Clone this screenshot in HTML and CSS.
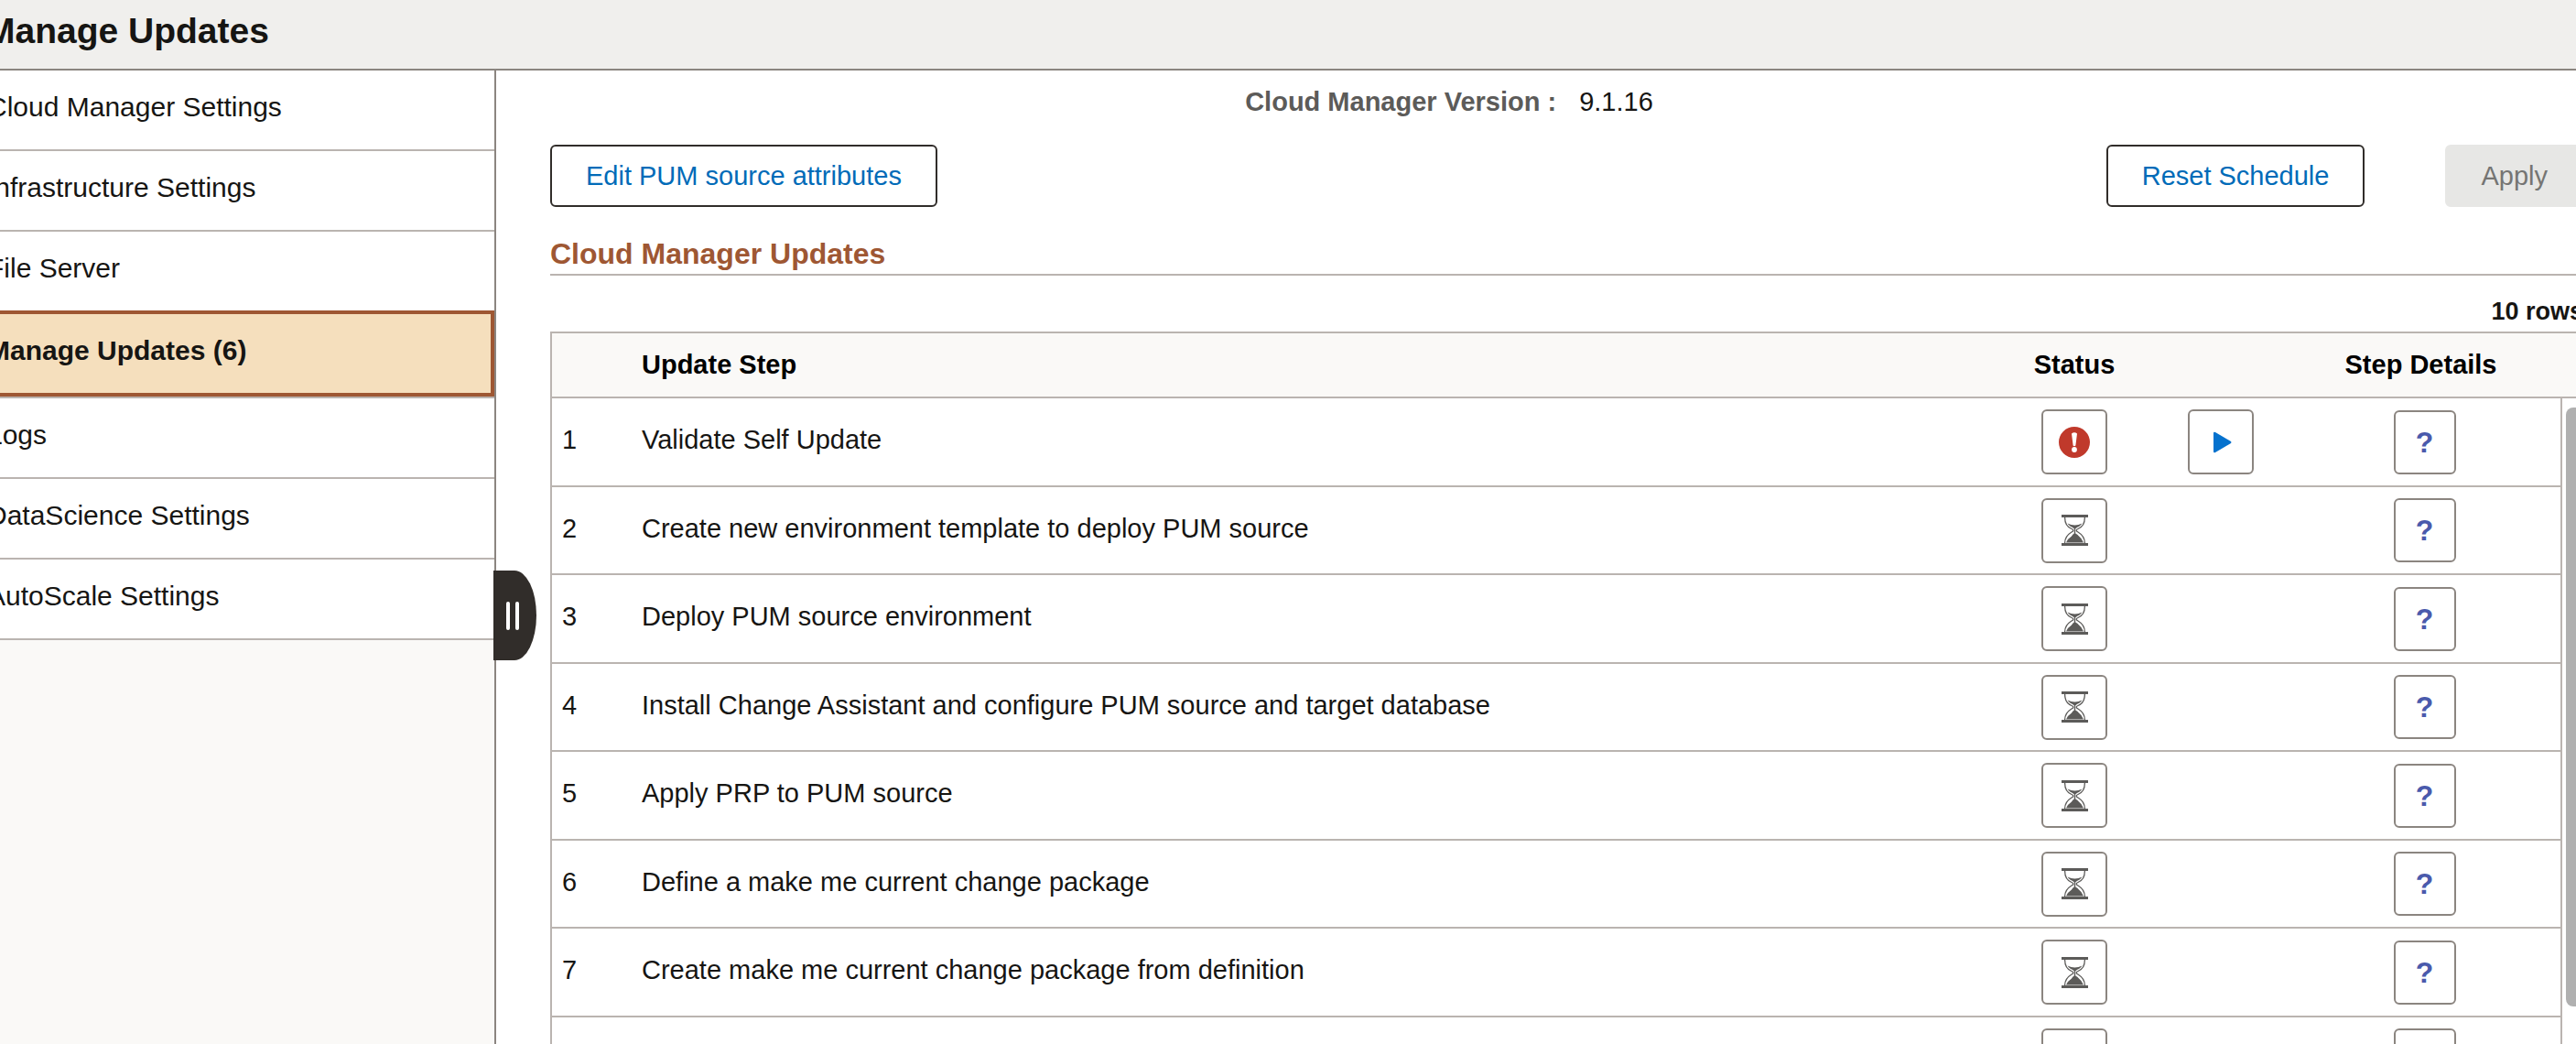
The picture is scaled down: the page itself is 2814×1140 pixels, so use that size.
FILE: index.html
```html
<!DOCTYPE html>
<html lang="en">
<head>
<meta charset="utf-8">
<title>Manage Updates</title>
<link rel="stylesheet" href="styles.css">
</head>
<body>
<svg class="sprite" aria-hidden="true">
  <symbol id="hourglass" viewBox="0 0 29 34">
    <path d="M0 0H29V3H0ZM0 31H29V34H0Z" fill="#5c5b59"/>
    <path d="M3.6 3C3.6 10 6 13.5 11 15.5C13.4 16.6 13.4 17.6 11 19C6 22 3.6 25.5 3.6 31M25.4 3C25.4 10 23 13.5 18 15.5C15.6 16.6 15.6 17.6 18 19C23 22 25.4 25.5 25.4 31" fill="none" stroke="#5c5b59" stroke-width="1.3"/>
    <path d="M6.5 9.5Q14.5 13.5 22.5 9.5C21 12.5 18 13 15.2 15.2V20.5Q17.500 21.500 19 23.500Q22 25.500 24 30.500H5Q7 26 11 23.500Q12 21.500 13.800 20.500V15.200C11 13 8 12.500 6.500 9.500Z" fill="#5c5b59"/>
  </symbol>
  <symbol id="error" viewBox="0 0 34 34">
    <circle cx="17" cy="17" r="17" fill="#c0392b"/>
    <path d="M14 7.500Q17 5 20 7.500L18.400 20.500Q17 21.800 15.600 20.500Z" fill="#fff"/>
    <circle cx="17" cy="25" r="2.900" fill="#fff"/>
  </symbol>
  <symbol id="play" viewBox="0 0 24 24">
    <path d="M4 2Q4 0 6 1L23 11Q24 12 23 13L6 23Q4 24 4 22Z" fill="#0572ce"/>
  </symbol>
</svg>
<header class="banner"><h1>Manage Updates</h1></header>
<div class="shell">
  <nav class="sidebar" aria-label="Settings">
    <ul>
      <li><a href="#cloud">Cloud Manager Settings</a></li>
      <li><a href="#infrastructure">Infrastructure Settings</a></li>
      <li><a href="#files">File Server</a></li>
      <li class="active"><a href="#updates" aria-current="page">Manage Updates (6)</a></li>
      <li><a href="#logs">Logs</a></li>
      <li><a href="#datascience">DataScience Settings</a></li>
      <li><a href="#autoscale">AutoScale Settings</a></li>
    </ul>
  </nav>
  <main class="content">
    <button class="handle" type="button" aria-label="Collapse menu"><span></span><span></span></button>
    <p class="version"><strong>Cloud Manager Version :</strong><span>9.1.16</span></p>
    <div class="actions">
      <button class="btn" type="button">Edit PUM source attributes</button>
      <button class="btn push" type="button">Reset Schedule</button>
      <button class="btn" type="button" disabled>Apply</button>
    </div>
    <h2>Cloud Manager Updates</h2>
    <p class="count">10 rows</p>
    <table class="steps">
      <colgroup><col class="c-num"><col><col class="c-status"><col class="c-run"><col class="c-details"><col class="c-gutter"></colgroup>
      <thead>
        <tr><th></th><th class="name">Update Step</th><th>Status</th><th></th><th class="details">Step Details</th><th></th></tr>
      </thead>
      <tbody>
        <tr><td class="num">1</td><td class="name">Validate Self Update</td>
          <td><button class="icon-btn" type="button" aria-label="Error"><svg width="34" height="34"><use href="#error"/></svg></button></td>
          <td><button class="icon-btn" type="button" aria-label="Run"><svg width="24" height="24"><use href="#play"/></svg></button></td>
          <td class="help"><button class="icon-btn" type="button">?</button></td>
          <td class="gutter" rowspan="8"><div class="thumb"></div></td></tr>
        <tr><td class="num">2</td><td class="name">Create new environment template to deploy PUM source</td>
          <td><button class="icon-btn" type="button" aria-label="Pending"><svg width="29" height="34"><use href="#hourglass"/></svg></button></td><td></td>
          <td class="help"><button class="icon-btn" type="button">?</button></td></tr>
        <tr><td class="num">3</td><td class="name">Deploy PUM source environment</td>
          <td><button class="icon-btn" type="button" aria-label="Pending"><svg width="29" height="34"><use href="#hourglass"/></svg></button></td><td></td>
          <td class="help"><button class="icon-btn" type="button">?</button></td></tr>
        <tr><td class="num">4</td><td class="name">Install Change Assistant and configure PUM source and target database</td>
          <td><button class="icon-btn" type="button" aria-label="Pending"><svg width="29" height="34"><use href="#hourglass"/></svg></button></td><td></td>
          <td class="help"><button class="icon-btn" type="button">?</button></td></tr>
        <tr><td class="num">5</td><td class="name">Apply PRP to PUM source</td>
          <td><button class="icon-btn" type="button" aria-label="Pending"><svg width="29" height="34"><use href="#hourglass"/></svg></button></td><td></td>
          <td class="help"><button class="icon-btn" type="button">?</button></td></tr>
        <tr><td class="num">6</td><td class="name">Define a make me current change package</td>
          <td><button class="icon-btn" type="button" aria-label="Pending"><svg width="29" height="34"><use href="#hourglass"/></svg></button></td><td></td>
          <td class="help"><button class="icon-btn" type="button">?</button></td></tr>
        <tr><td class="num">7</td><td class="name">Create make me current change package from definition</td>
          <td><button class="icon-btn" type="button" aria-label="Pending"><svg width="29" height="34"><use href="#hourglass"/></svg></button></td><td></td>
          <td class="help"><button class="icon-btn" type="button">?</button></td></tr>
        <tr><td class="num"></td><td class="name"></td>
          <td><button class="icon-btn" type="button" aria-label="Pending"></button></td><td></td>
          <td class="help"><button class="icon-btn" type="button" aria-label="Help"></button></td></tr>
      </tbody>
    </table>
  </main>
</div>
</body>
</html>
```
FILE: styles.css
```css
* { box-sizing: border-box; }

body {
  margin: 0;
  height: 100vh;
  overflow: hidden;
  display: flex;
  flex-direction: column;
  background: #fff;
  color: #161513;
  font: 29px/34px "Liberation Sans", Arial, sans-serif;
}

h1, h2, p, ul { margin: 0; padding: 0; }
button { font: inherit; }
.sprite { display: none; }

.banner {
  flex: none;
  padding: 11px 0 18px;
  margin-left: -16px;
  background: #f0efed;
  border-bottom: 2px solid #8b8580;
}
h1 { font-size: 39px; line-height: 46px; }

/* The shell runs a little past both window edges */
.shell {
  flex: 1;
  min-height: 0;
  display: flex;
  margin: 0 -8px 0 -18px;
}

.sidebar {
  flex: none;
  width: 560px;
  background: #faf9f7;
  border-right: 2px solid #8b8580;
  font-size: 30px;
}
.sidebar ul { list-style: none; }
.sidebar li {
  background: #fff;
  border-bottom: 2px solid #bab4b0;
}
.sidebar li:nth-child(3) { border-bottom: 0; }
.sidebar a {
  display: block;
  padding: 23px 4px 29px;
  color: inherit;
  text-decoration: none;
}
.sidebar .active a {
  background: #f5dfbd;
  border: solid #9e5733;
  border-width: 4px 4px 4px 0;
  font-weight: bold;
}

.content {
  position: relative;
  flex: 1;
  min-width: 0;
  padding: 17px 0 0 59px;
}

.handle {
  position: absolute;
  left: -3px;
  top: 546px;
  width: 47px;
  height: 98px;
  padding: 0 0 0 14px;
  border: 0;
  border-radius: 0 24px 24px 0 / 0 49px 49px 0;
  background: #312d2a;
  display: flex;
  align-items: center;
  gap: 6px;
}
.handle span {
  width: 4px;
  height: 31px;
  border-radius: 2px;
  background: #fff;
}

.version {
  display: flex;
  justify-content: center;
  gap: 25px;
  padding-right: 257px;
}
.version strong { color: #5c5b59; }

.actions {
  display: flex;
  gap: 88px;
  margin-top: 30px;
}
.btn {
  height: 68px;
  padding: 0 37px;
  border: 2px solid #312d2a;
  border-radius: 6px;
  background: #fff;
  color: #006bb8;
}
.btn:disabled {
  border-color: #e7e7e5;
  background: #e7e7e5;
  color: #757573;
}
.push { margin-left: auto; }

h2 {
  margin-top: 33px;
  padding-bottom: 3px;
  border-bottom: 2px solid #bab4b0;
  color: #9e5733;
  font-size: 32px;
  line-height: 37px;
}

.count {
  margin-top: 22px;
  padding-bottom: 5px;
  font-size: 27px;
  font-weight: bold;
  text-align: right;
}

.steps {
  width: 100%;
  table-layout: fixed;
  border-spacing: 0;
  border: solid #bab4b0;
  border-width: 2px 0 0 2px;
}
.c-num { width: 98px; }
.c-status, .c-run { width: 160px; }
.c-details { width: 291px; }
.c-gutter { width: 25px; }

.steps th, .steps td {
  padding: 0;
  border-bottom: 2px solid #bab4b0;
  text-align: center;
  vertical-align: middle;
}
.steps th {
  height: 71px;
  padding-bottom: 2px;
  background: #faf9f7;
  color: #000;
}
.steps tbody tr { height: 97px; }
.steps tbody tr:nth-child(even) { height: 96px; }
.steps .name { text-align: left; }
.steps td.name { padding-bottom: 5px; }
.steps .num { padding: 0 0 5px 11px; text-align: left; }
.steps .details { padding-right: 14px; }
.steps .help { padding-right: 6px; }
.steps .gutter {
  padding: 10px 0 0 4px;
  border-left: 2px solid #bab4b0;
  vertical-align: top;
}
.thumb {
  height: 654px;
  border-radius: 8px;
  background: #b0b0b0;
}

.icon-btn {
  display: flex;
  align-items: center;
  justify-content: center;
  width: 72px;
  height: 71px;
  margin: 0 auto;
  padding: 0;
  border: 2px solid #8b8580;
  border-radius: 6px;
  background: #fff;
}
.help .icon-btn {
  width: 68px;
  height: 70px;
  color: #4a5aac;
  font-size: 32px;
  font-weight: bold;
}
```
